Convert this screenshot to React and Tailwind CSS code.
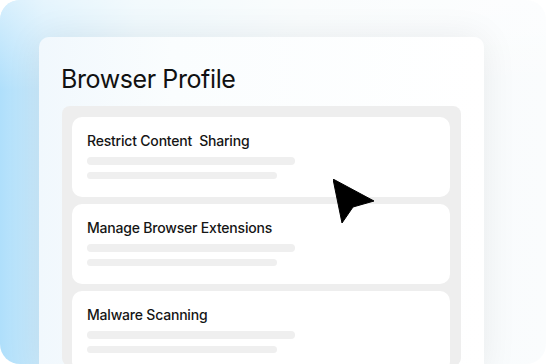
export default function App() {
  const items = ["Restrict Content  Sharing", "Manage Browser Extensions", "Malware Scanning"];

  return (
    <div className="w-[546px] h-[364px] bg-white">
      <div className="relative w-full h-full overflow-hidden rounded-[20px] bg-[linear-gradient(90deg,#afdffb_0%,#cdebfc_8%,#e6f5fc_25%,#f5fafc_55%,#fafcfd_100%)]">
        {/* soft fade towards the top */}
        <div className="absolute inset-x-0 top-0 h-[90px] bg-[linear-gradient(180deg,rgba(255,255,255,0.5),rgba(255,255,255,0))]" />

        <div className="relative ml-[39px] mt-[37px] w-[445px] h-[340px] rounded-[10px] bg-[linear-gradient(90deg,#f1f8fd_0%,#fafdfe_30%,#ffffff_100%)] shadow-[0_0_36px_rgba(0,0,0,0.07)] font-['Inter',sans-serif]">
          <h1 className="pl-[22px] pt-[26px] text-[25px] leading-[32px] tracking-[-0.4px] text-[#111111]">
            Browser Profile
          </h1>

          <div className="ml-[23px] mt-[11px] w-[399px] h-[260px] rounded-[8px] bg-[#eeeeee] pl-[10px] pt-[11px] flex flex-col gap-[7px]">
            {items.map((t) => (
              <div key={t} className="w-[378px] h-[80px] shrink-0 rounded-[10px] bg-white pl-[15px] pt-[14px]">
                <div className="text-[14px] leading-[20px] font-medium tracking-[-0.2px] text-[#151515] whitespace-pre">{t}</div>
                <div className="mt-[6px] w-[208px] h-[8px] rounded-full bg-[#efefef]" />
                <div className="mt-[7px] w-[190px] h-[7px] rounded-full bg-[#efefef]" />
              </div>
            ))}
          </div>
        </div>

        {/* cursor */}
        <svg className="absolute left-[333px] top-[179px]" width="42" height="46" viewBox="0 0 42 46">
          <polygon points="0,0 41,22 20,28 9,44" fill="#000" strokeLinejoin="round" stroke="#000" strokeWidth="1" />
        </svg>
      </div>
    </div>
  );
}
